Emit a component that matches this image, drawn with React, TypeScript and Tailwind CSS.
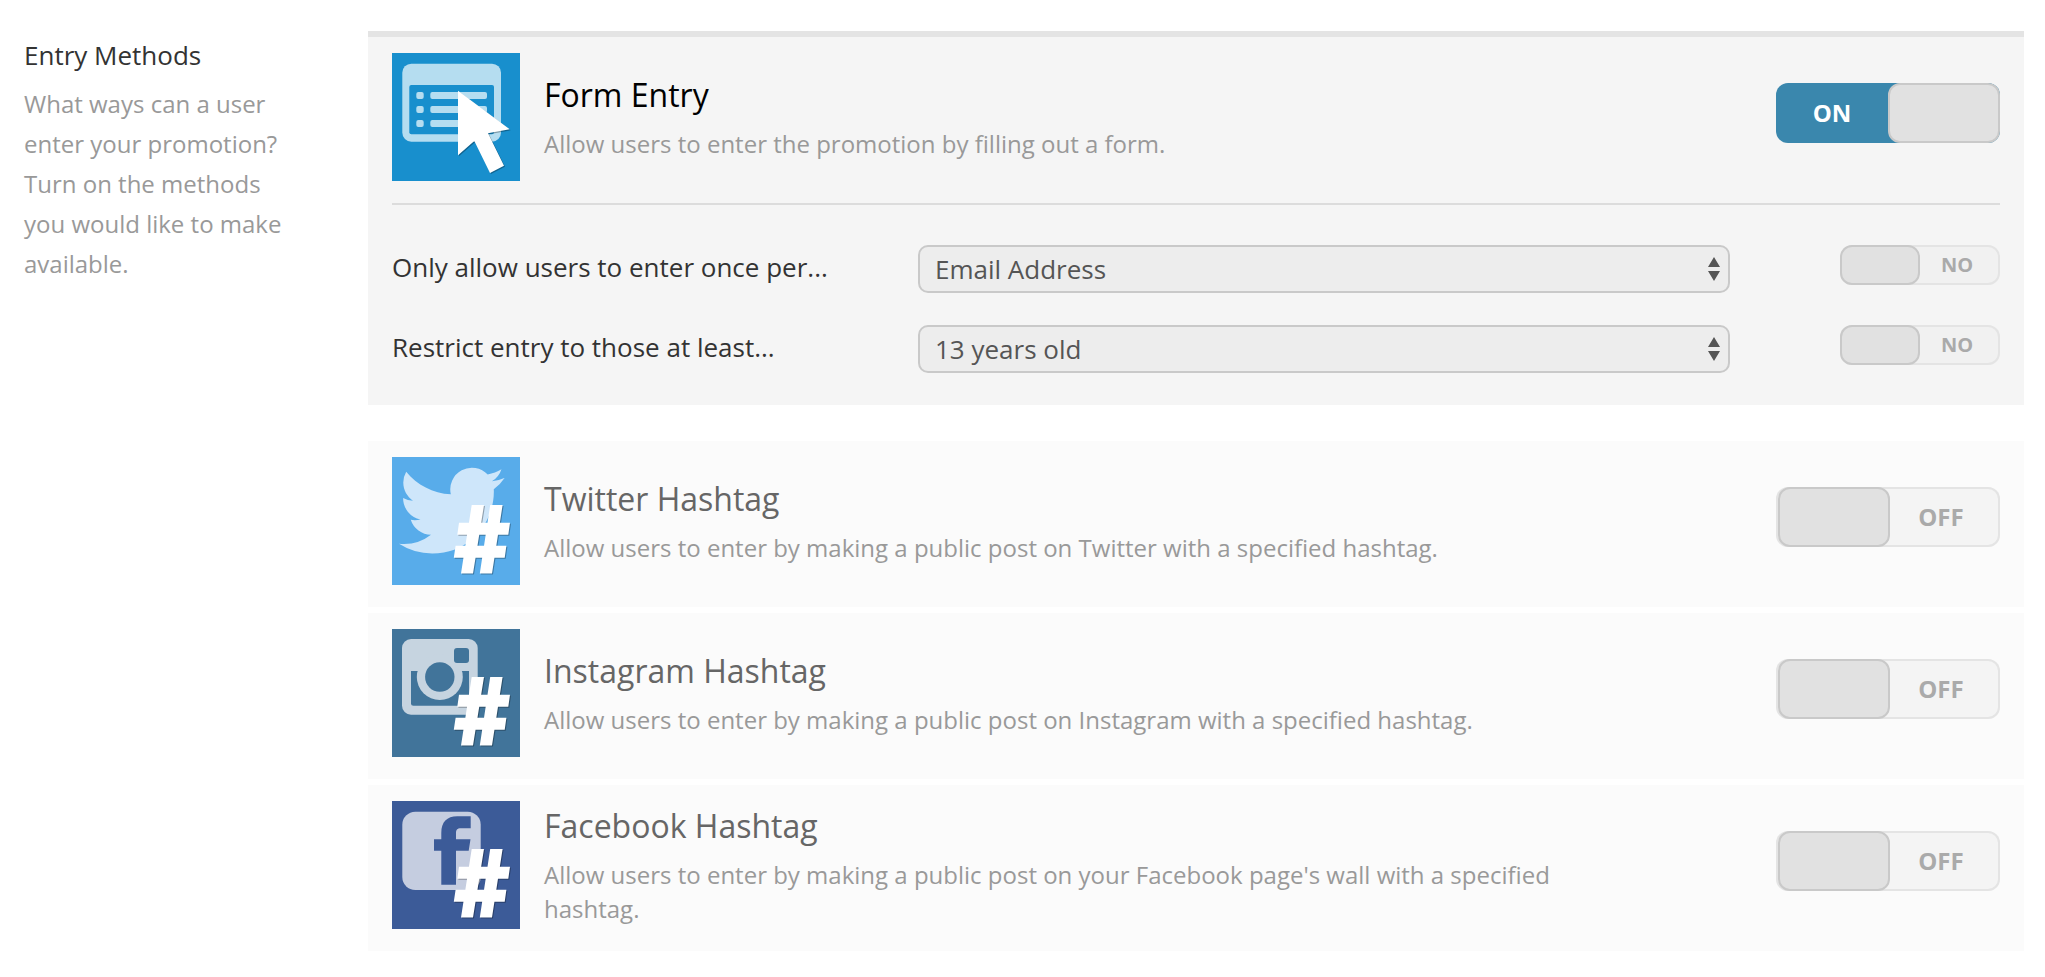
import { useId, useState, type ReactNode } from "react";

const BIRD =
  "M23.953 4.57a10 10 0 01-2.825.775 4.958 4.958 0 002.163-2.723c-.951.555-2.005.959-3.127 1.184a4.92 4.92 0 00-8.384 4.482C7.69 8.095 4.067 6.13 1.64 3.162a4.822 4.822 0 00-.666 2.475c0 1.71.87 3.213 2.188 4.096a4.904 4.904 0 01-2.228-.616v.06a4.923 4.923 0 003.946 4.827 4.996 4.996 0 01-2.212.085 4.936 4.936 0 004.604 3.417 9.867 9.867 0 01-6.102 2.105c-.39 0-.779-.023-1.17-.067a13.995 13.995 0 007.557 2.209c9.053 0 13.998-7.496 13.998-13.985 0-.21 0-.42-.015-.63A9.935 9.935 0 0024 4.59z";

const HASH =
  "M79.7 48H92L81 116.5H69zM98.2 48h12.4L100 116.5H87.8zM67 65.7h51l-1.7 12H65.3zM63.6 88.7h50.8l-1.7 12H61.8z";

const CURSOR = "M66 37.7l51.7 38.6L96 80.3l16 32.4L98 120 82.3 88 66 102.3z";

function Badge({ d }: { d: string }) {
  return (
    <>
      <path d={d} fill="#000" opacity=".3" transform="translate(1 1)" />
      <path d={d} fill="#fff" />
    </>
  );
}

function FormIcon() {
  return (
    <svg viewBox="0 0 128 128" className="size-32 shrink-0 bg-[#188fcd]" aria-hidden="true">
      <rect x="10.3" y="10.7" width="98.7" height="78" rx="9" fill="#b5ddf0" />
      <rect x="17.3" y="32" width="84.7" height="49.3" rx="2" fill="#188fcd" />
      {[39, 53, 67].map((y) => (
        <g key={y} fill="#b5ddf0">
          <rect x="24.3" y={y} width="7.4" height="7" rx="2" />
          <rect x="38.3" y={y} width="56.7" height="7" rx="2" />
        </g>
      ))}
      <Badge d={CURSOR} />
    </svg>
  );
}

function TwitterIcon() {
  return (
    <svg viewBox="0 0 128 128" className="size-32 shrink-0 bg-[#58acea]" aria-hidden="true">
      <path d={BIRD} fill="#cee6fa" transform="translate(7 .8) scale(4.4)" />
      <Badge d={HASH} />
    </svg>
  );
}

function InstagramIcon() {
  return (
    <svg viewBox="0 0 128 128" className="size-32 shrink-0 bg-[#41749a]" aria-hidden="true">
      <rect x="10" y="10" width="75.7" height="75.7" rx="9" fill="#c6d4e0" />
      <path d="M19 42h58v32.2a2.5 2.5 0 0 1-2.5 2.5h-53a2.5 2.5 0 0 1-2.5-2.5z" fill="#41749a" />
      <circle cx="47.8" cy="48" r="23" fill="#c6d4e0" />
      <circle cx="47.8" cy="48" r="14.7" fill="#41749a" />
      <rect x="62" y="19" width="15" height="15" rx="3" fill="#41749a" />
      <Badge d={HASH} />
    </svg>
  );
}

function FacebookIcon() {
  return (
    <svg viewBox="0 0 128 128" className="size-32 shrink-0 bg-[#3c5b98]" aria-hidden="true">
      <rect x="10.3" y="10.7" width="78.4" height="78.3" rx="13" fill="#c5cde0" />
      <path
        d="M49.3 83.7v-34H42V38.3h7.3V32c0-11 5.5-16.7 16-16.7h13.4v12H69c-4 0-5 1.5-5 5v6h14.5l-1.8 11.4H64v34z"
        fill="#3c5b98"
      />
      <Badge d={HASH} />
    </svg>
  );
}

function Toggle({ label, initial = false }: { label: string; initial?: boolean }) {
  const [on, setOn] = useState(initial);

  return (
    <button
      type="button"
      role="switch"
      aria-checked={on}
      aria-label={label}
      onClick={() => setOn(!on)}
      className={`mt-[30px] flex h-[60px] w-56 shrink-0 items-center self-start rounded-xl text-2xl font-bold ${
        on
          ? "bg-[#3a87ad] text-white"
          : "bg-[#f4f4f4] pl-0.5 text-[#aaa] inset-ring-2 inset-ring-[#e4e4e4]"
      }`}
    >
      {on && <span className="flex-1">ON</span>}
      <span className="h-full w-28 shrink-0 rounded-xl border-2 border-[#c9c9c9] bg-[#e1e1e1]" />
      {!on && <span className="flex-1 pr-2">OFF</span>}
    </button>
  );
}

function SmallToggle({ label }: { label: string }) {
  const [on, setOn] = useState(false);

  return (
    <button
      type="button"
      role="switch"
      aria-checked={on}
      aria-label={label}
      onClick={() => setOn(!on)}
      className={`flex h-10 w-40 items-center rounded-xl text-xl font-bold ${
        on ? "bg-[#3a87ad] text-white" : "bg-[#f1f1f1] text-[#aaa] inset-ring-2 inset-ring-[#e4e4e4]"
      }`}
    >
      {on && <span className="flex-1">YES</span>}
      <span className="h-full w-20 shrink-0 rounded-xl border-2 border-[#c9c9c9] bg-[#e1e1e1]" />
      {!on && <span className="flex-1 pr-1.5">NO</span>}
    </button>
  );
}

type MethodProps = {
  icon: ReactNode;
  title: string;
  description: string;
  enabled?: boolean;
};

function Method({ icon, title, description, enabled }: MethodProps) {
  return (
    <div className="flex justify-between pt-4 pb-[22px]">
      <div className="flex w-3/4 items-center gap-6">
        {icon}
        <div className="pb-0.5">
          <h3 className={`text-[32px] leading-[48px] ${enabled ? "text-black" : "text-[#666]"}`}>
            {title}
          </h3>
          <p className="mt-2 text-2xl leading-[34px] text-[#999]">{description}</p>
        </div>
      </div>
      <Toggle label={title} initial={enabled} />
    </div>
  );
}

function Rule({ label, options }: { label: string; options: string[] }) {
  const id = useId();

  return (
    <div className="flex items-start">
      <label htmlFor={id} className="w-[526px] shrink-0 text-[26px] leading-[44px] text-[#333]">
        {label}
      </label>
      <div className="relative flex-1">
        <select
          id={id}
          className="block h-12 w-full appearance-none rounded-[10px] border-2 border-[#c9c9c9] bg-[#ededed] px-[15px] text-[26px] leading-[44px] text-[#555]"
        >
          {options.map((o) => (
            <option key={o}>{o}</option>
          ))}
        </select>
        <svg
          viewBox="0 0 12 24"
          className="pointer-events-none absolute top-3 right-2.5 h-6 w-3 fill-[#555]"
          aria-hidden="true"
        >
          <path d="M6 0l6 10H0zM6 24l6-10H0z" />
        </svg>
      </div>
      <div className="flex w-[270px] shrink-0 justify-end">
        <SmallToggle label={label} />
      </div>
    </div>
  );
}

export default function App() {
  return (
    <div className="flex min-h-screen items-start bg-white pt-[31px] pr-[21px] pl-6 font-['Open_Sans',sans-serif]">
      <aside className="mr-20 w-[264px] shrink-0 pt-1">
        <h2 className="text-[26px] leading-10 text-[#333]">Entry Methods</h2>
        <p className="mt-[9px] text-2xl leading-10 text-[#999]">
          What ways can a user enter your promotion? Turn on the methods you would like to make
          available.
        </p>
      </aside>

      <main className="flex-1">
        <section className="border-t-[6px] border-[#e4e4e4] bg-[#f5f5f5] px-6 pb-8">
          <Method
            icon={<FormIcon />}
            title="Form Entry"
            description="Allow users to enter the promotion by filling out a form."
            enabled
          />
          <div className="flex flex-col gap-8 border-t-2 border-[#dcdcdc] pt-10">
            <Rule
              label="Only allow users to enter once per..."
              options={["Email Address", "IP Address"]}
            />
            <Rule
              label="Restrict entry to those at least..."
              options={["13 years old", "18 years old", "21 years old"]}
            />
          </div>
        </section>

        <div className="mt-9 flex flex-col gap-1.5">
          <section className="bg-[#fbfbfb] px-6">
            <Method
              icon={<TwitterIcon />}
              title="Twitter Hashtag"
              description="Allow users to enter by making a public post on Twitter with a specified hashtag."
            />
          </section>
          <section className="bg-[#fbfbfb] px-6">
            <Method
              icon={<InstagramIcon />}
              title="Instagram Hashtag"
              description="Allow users to enter by making a public post on Instagram with a specified hashtag."
            />
          </section>
          <section className="bg-[#fbfbfb] px-6">
            <Method
              icon={<FacebookIcon />}
              title="Facebook Hashtag"
              description="Allow users to enter by making a public post on your Facebook page's wall with a specified hashtag."
            />
          </section>
        </div>
      </main>
    </div>
  );
}
